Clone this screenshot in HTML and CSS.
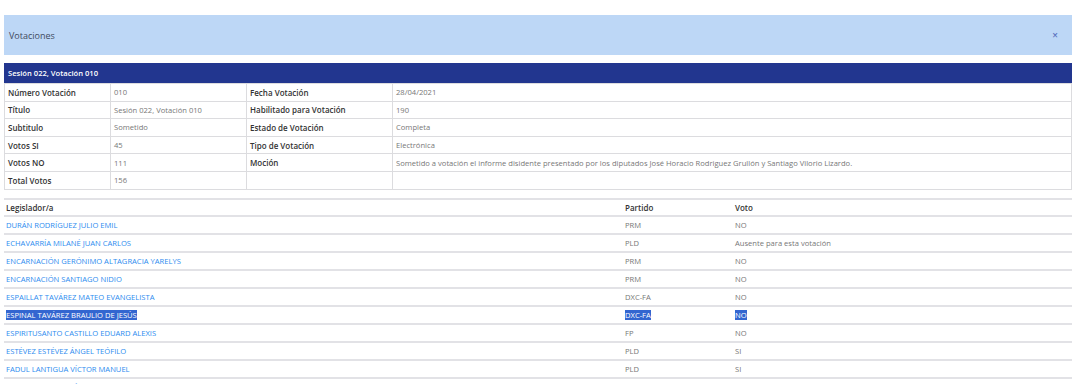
FILE: index.html
```html
<!DOCTYPE html>
<html lang="es">
<head>
  <meta charset="UTF-8" />
  <title>Votaciones</title>
  <link rel="stylesheet" href="styles.css">
</head>
<body>
  <div class="page">
    <header class="panel-head">
      <span class="panel-title">Votaciones</span>
      <span class="close">&times;</span>
    </header>

    <div class="session-bar">Sesión 022, Votación 010</div>
    <table class="details">
      <colgroup>
        <col class="c1"><col class="c2"><col class="c3"><col>
      </colgroup>
      <tbody>
        <tr>
          <th>Número Votación</th><td>010</td>
          <th>Fecha Votación</th><td>28/04/2021</td>
        </tr>
        <tr>
          <th>Título</th><td>Sesión 022, Votación 010</td>
          <th>Habilitado para Votación</th><td>190</td>
        </tr>
        <tr>
          <th>Subtitulo</th><td>Sometido</td>
          <th>Estado de Votación</th><td>Completa</td>
        </tr>
        <tr>
          <th>Votos SI</th><td>45</td>
          <th>Tipo de Votación</th><td>Electrónica</td>
        </tr>
        <tr>
          <th>Votos NO</th><td>111</td>
          <th>Moción</th><td>Sometido a votación el informe disidente presentado por los diputados José Horacio Rodriguez Grullón y Santiago Vilorio Lizardo.</td>
        </tr>
        <tr>
          <th>Total Votos</th><td>156</td>
          <th></th><td></td>
        </tr>
      </tbody>
    </table>

    <table class="votes">
      <colgroup>
        <col class="v1"><col class="v2"><col>
      </colgroup>
      <thead>
        <tr><th>Legislador/a</th><th>Partido</th><th>Voto</th></tr>
      </thead>
      <tbody>
        <tr><td><a href="#">DURÁN RODRÍGUEZ JULIO EMIL</a></td><td>PRM</td><td>NO</td></tr>
        <tr><td><a href="#">ECHAVARRÍA MILANÉ JUAN CARLOS</a></td><td>PLD</td><td>Ausente para esta votación</td></tr>
        <tr><td><a href="#">ENCARNACIÓN GERÓNIMO ALTAGRACIA YARELYS</a></td><td>PRM</td><td>NO</td></tr>
        <tr><td><a href="#">ENCARNACIÓN SANTIAGO NIDIO</a></td><td>PRM</td><td>NO</td></tr>
        <tr><td><a href="#">ESPAILLAT TAVÁREZ MATEO EVANGELISTA</a></td><td>DXC-FA</td><td>NO</td></tr>
        <tr class="picked"><td><a href="#"><span class="sel">ESPINAL TAVÁREZ BRAULIO DE JESÚS</span></a></td><td><span class="sel">DXC-FA</span></td><td><span class="sel">NO</span></td></tr>
        <tr><td><a href="#">ESPIRITUSANTO CASTILLO EDUARD ALEXIS</a></td><td>FP</td><td>NO</td></tr>
        <tr><td><a href="#">ESTÉVEZ ESTÉVEZ ÁNGEL TEÓFILO</a></td><td>PLD</td><td>SI</td></tr>
        <tr><td><a href="#">FADUL LANTIGUA VÍCTOR MANUEL</a></td><td>PLD</td><td>SI</td></tr>
        <tr><td><a href="#">FAMILIA ECHAVARRÍA SERVIA AUGUSTA</a></td><td>PRM</td><td>NO</td></tr>
      </tbody>
    </table>
  </div>
</body>
</html>
```

FILE: styles.css
```css
html, body {
  margin: 0;
  background: #fff;
  overflow: hidden;
}
body {
  font-family: "Open Sans", "Noto Sans", Arial, sans-serif;
  font-size: 7.6px;
  color: #333;
}
.page {
  padding: 15px 3px 0 4px;
}
.panel-head {
  display: flex;
  align-items: center;
  justify-content: space-between;
  height: 40px;
  background-color: #bdd7f6;
  padding: 0 14px 0 5px;
}
.panel-title {
  font-size: 9px;
  color: #3f4a5e;
}
.close {
  color: #5b72be;
  font-size: 10px;
  font-weight: 600;
}
.session-bar {
  margin-top: 8px;
  height: 20px;
  line-height: 20px;
  background-color: #22368f;
  color: #fff;
  padding-left: 4px;
  font-weight: 600;
}
table {
  width: 100%;
  border-collapse: collapse;
  table-layout: fixed;
}
.details th, .details td {
  height: 16.6px;
  padding: 0 3px;
  border: 1px solid #dcdcdf;
  text-align: left;
  white-space: nowrap;
  overflow: hidden;
}
.details th {
  font-size: 8px;
  font-weight: 600;
  color: #333;
}
.details td {
  color: #777;
}
.details .c1 { width: 106px; }
.details .c2 { width: 136px; }
.details .c3 { width: 146px; }
.votes {
  margin-top: 8px;
}
.votes th, .votes td {
  height: 16px;
  padding: 0 2px;
  text-align: left;
  border-top: 2px solid #e2e2e6;
  white-space: nowrap;
}
.votes td {
  color: #777;
}
.votes th {
  font-size: 8px;
  font-weight: 600;
  color: #333;
  height: 15px;
}
.votes .v1 { width: 619px; }
.votes .v2 { width: 110px; }
.votes a {
  color: #2e8cef;
  text-decoration: none;
}
.sel {
  background-color: #3366d0;
  color: #fff;
}
```
